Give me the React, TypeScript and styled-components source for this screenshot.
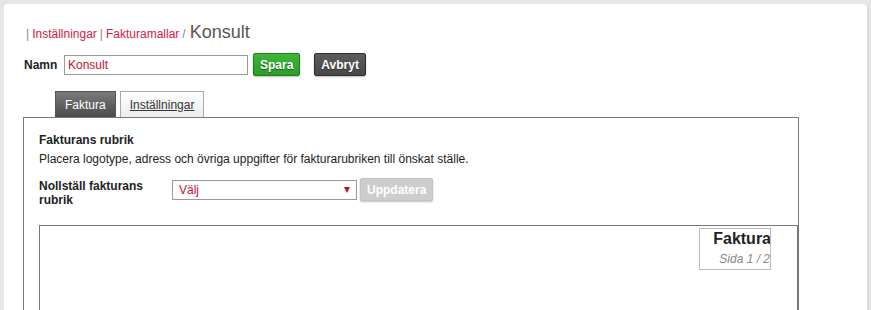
import { createGlobalStyle, styled } from 'styled-components';

const GlobalStyle = createGlobalStyle`
  html, body {
    margin: 0;
    padding: 0;
    background: #e6e6e6;
    font-family: "Liberation Sans", Arial, sans-serif;
    font-size: 12px;
    color: #333;
  }
`;

const Card = styled.div`
  margin: 4px 4px 0 4px;
  padding: 18px 20px 40px 20px;
  background: #fff;
  border-radius: 4px;
  box-shadow: 2px 0 0 #dcdcdc;
  min-height: 400px;
`;

const Breadcrumb = styled.div`
  display: flex;
  align-items: baseline;
  padding-left: 2px;
  height: 22px;
  color: #888;
`;

const Crumb = styled.span`
  color: #d6203e;
  margin: 0 3px;
`;

const Current = styled.span`
  font-size: 18px;
  color: #555;
  margin-left: 4px;
`;

const NameRow = styled.div`
  display: flex;
  align-items: center;
  margin-top: 9px;
  height: 23px;
`;

const Label = styled.label`
  font-weight: bold;
  color: #222;
  width: 40px;
`;

const TextInput = styled.input`
  box-sizing: border-box;
  width: 184px;
  height: 20px;
  border: 1px solid #999;
  padding: 0 3px;
  font-family: inherit;
  font-size: 12px;
  color: #c8102e;
  outline: none;
`;

const Button = styled.button<{ $variant: 'save' | 'cancel' | 'disabled' }>`
  box-sizing: border-box;
  height: 23px;
  padding: 0 6px;
  border-radius: 2px;
  font-family: inherit;
  font-size: 12px;
  font-weight: bold;
  color: #fff;
  cursor: pointer;
  border: 1px solid
    ${({ $variant }) => ($variant === 'save' ? '#1f7d1b' : $variant === 'cancel' ? '#2e2e2e' : '#c4c4c4')};
  background: ${({ $variant }) =>
    $variant === 'save'
      ? 'linear-gradient(#3fb53a, #2b9d27)'
      : $variant === 'cancel'
        ? 'linear-gradient(#5c5c5c, #484848)'
        : '#cdcdcd'};
  box-shadow: 0 1px 2px rgba(0, 0, 0, 0.25);
  text-shadow: ${({ $variant }) => ($variant === 'disabled' ? 'none' : '0 1px 1px rgba(0,0,0,0.4)')};
`;

const Tabs = styled.div`
  display: flex;
  gap: 4px;
  margin: 15px 0 0 31px;
  height: 26px;
`;

const Tab = styled.div<{ $active?: boolean }>`
  box-sizing: border-box;
  height: 26px;
  padding: 0 9px;
  display: flex;
  align-items: center;
  font-size: 12px;
  border: 1px solid ${({ $active }) => ($active ? '#555' : '#aaa')};
  border-bottom: none;
  color: ${({ $active }) => ($active ? '#fff' : '#333')};
  text-decoration: ${({ $active }) => ($active ? 'none' : 'underline')};
  background: ${({ $active }) => ($active ? 'linear-gradient(#7a7a7a, #4a4a4a)' : 'linear-gradient(#fff, #ececec)')};
`;

const Panel = styled.div`
  box-sizing: border-box;
  width: 776px;
  margin-left: -1px;
  border: 1px solid #777;
  padding: 14px 14px 0 15px;
  height: 300px;
`;

const Heading = styled.div`
  font-weight: bold;
  color: #222;
  line-height: 16px;
`;

const Description = styled.div`
  margin-top: 3px;
  line-height: 16px;
  color: #222;
`;

const ResetRow = styled.div`
  display: flex;
  align-items: flex-start;
  margin-top: 10px;
`;

const ResetLabel = styled.div`
  width: 133px;
  font-weight: bold;
  color: #222;
  line-height: 14px;
  padding-top: 2px;
`;

const Select = styled.div`
  box-sizing: border-box;
  width: 185px;
  height: 20px;
  margin-top: 3px;
  border: 1px solid #999;
  padding: 0 6px;
  display: flex;
  align-items: center;
  justify-content: space-between;
  color: #c8102e;
  margin-right: 3px;
`;

const Caret = styled.span`
  width: 0;
  height: 0;
  border-left: 3.5px solid transparent;
  border-right: 3.5px solid transparent;
  border-top: 6px solid #c8102e;
`;

const Preview = styled.div`
  box-sizing: border-box;
  margin-top: 18px;
  margin-right: -15px;
  height: 160px;
  border: 1px solid #777;
  border-right-width: 2px;
  display: flex;
  justify-content: flex-end;
  align-items: flex-start;
  padding: 2px 26px 0 0;
`;

const TitleBox = styled.div`
  box-sizing: border-box;
  width: 72px;
  height: 42px;
  border: 1px solid #bbb;
  text-align: right;
  overflow: hidden;
  white-space: nowrap;
`;

const TitleText = styled.div`
  font-size: 16px;
  font-weight: bold;
  color: #222;
  line-height: 20px;
  margin-right: -1px;
`;

const PageText = styled.div`
  font-style: italic;
  color: #888;
  line-height: 16px;
  margin-top: 2px;
`;

export default function App() {
  return (
    <>
      <GlobalStyle />
      <Card>
        <Breadcrumb>
          |<Crumb>Inställningar</Crumb>|<Crumb>Fakturamallar</Crumb>/<Current>Konsult</Current>
        </Breadcrumb>
        <NameRow>
          <Label>Namn</Label>
          <TextInput defaultValue="Konsult" />
          <Button $variant="save" style={{ marginLeft: 5 }}>Spara</Button>
          <Button $variant="cancel" style={{ marginLeft: 14 }}>Avbryt</Button>
        </NameRow>
        <Tabs>
          <Tab $active>Faktura</Tab>
          <Tab>Inställningar</Tab>
        </Tabs>
        <Panel>
          <Heading>Fakturans rubrik</Heading>
          <Description>Placera logotype, adress och övriga uppgifter för fakturarubriken till önskat ställe.</Description>
          <ResetRow>
            <ResetLabel>
              Nollställ fakturans
              <br />
              rubrik
            </ResetLabel>
            <Select>
              Välj
              <Caret />
            </Select>
            <Button $variant="disabled" style={{ marginTop: 1 }}>Uppdatera</Button>
          </ResetRow>
          <Preview>
            <TitleBox>
              <TitleText>Faktura</TitleText>
              <PageText>Sida 1 / 2</PageText>
            </TitleBox>
          </Preview>
        </Panel>
      </Card>
    </>
  );
}
